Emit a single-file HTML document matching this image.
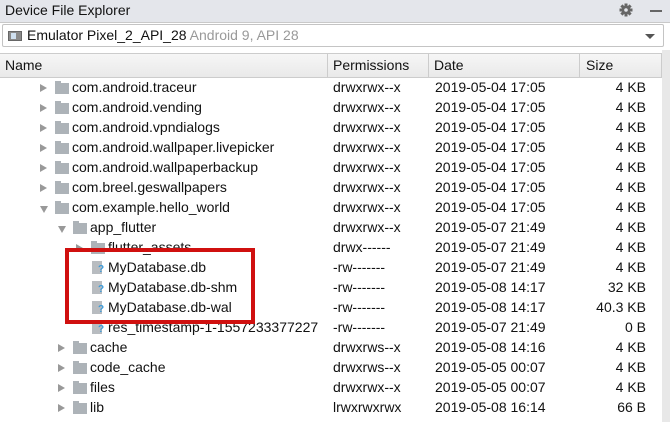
<!DOCTYPE html><html><head><style>
*{margin:0;padding:0;box-sizing:border-box}
body{width:670px;height:422px;overflow:hidden;background:#fff;font-family:"Liberation Sans",sans-serif;font-size:14px;color:#111;position:relative}
.title{position:absolute;left:0;top:0;width:670px;height:23px;background:#e4e6eb;border-bottom:1px solid #c9c9c9}
.title span{position:absolute;left:5px;top:2px;font-size:14px}
.combo{position:absolute;left:2px;top:24px;width:662px;height:23px;border:1px solid #c4c4c4;background:#fff;border-radius:2px}
.combo .t{position:absolute;left:24px;top:2px}
.combo .g{color:#999}
.hdr{position:absolute;left:0;top:53px;width:662px;height:25px;background:linear-gradient(#f6f6f6,#e9e9e9);border-top:1px solid #ccc;border-bottom:1px solid #ccc}
.hdr div{position:absolute;top:3px}
.sep{position:absolute;top:53px;width:1px;height:25px;background:#ccc}
.bgr{position:absolute;left:662px;top:50px;width:8px;height:372px;background:#e8e8e8}
.row{position:absolute;left:0;width:662px;height:20px}
.row span{position:absolute;top:1px;white-space:nowrap}
.arr{position:absolute;top:6px;width:0;height:0;border-top:4px solid transparent;border-bottom:4px solid transparent;border-left:7px solid #999}
.arrd{position:absolute;top:8px;width:0;height:0;border-left:4px solid transparent;border-right:4px solid transparent;border-top:7px solid #999}
.fold{position:absolute;top:5px;width:14px;height:11px;background:#adb3b8}
.fold:before{content:"";position:absolute;left:0;top:-2px;width:6px;height:2px;background:#adb3b8}
.file{position:absolute;top:3px;width:10px;height:13px;background:#b8bcc0}
.file:after{content:"?";position:absolute;left:6px;top:3px;font-size:10px;color:#3a9ad9;font-weight:bold}
.red{position:absolute;left:65px;top:248px;width:190px;height:76px;border:4px solid #d0100f}
</style></head><body>
<div class="title"><span>Device File Explorer</span>
<svg style="position:absolute;left:619px;top:3px" width="14" height="14" viewBox="0 0 14 14"><g fill="#666"><rect x="5.5" y="0.5" width="3" height="13"/><rect x="0.5" y="5.5" width="13" height="3"/><rect x="5.5" y="0.5" width="3" height="13" transform="rotate(45 7 7)"/><rect x="5.5" y="0.5" width="3" height="13" transform="rotate(-45 7 7)"/><circle cx="7" cy="7" r="4.5"/></g><circle cx="7" cy="7" r="1.8" fill="#e4e6eb"/></svg>
<div style="position:absolute;left:650px;top:10px;width:12px;height:2px;background:#666"></div></div>
<div class="combo"><div style="position:absolute;left:5px;top:6px;width:14px;height:10px;background:#8a8a8a;border:1px solid #666"><div style="position:absolute;left:2px;top:1px;width:5px;height:6px;background:#cfe0f0"></div></div>
<div class="t">Emulator Pixel_2_API_28 <span class="g">Android 9, API 28</span></div>
<div style="position:absolute;right:8px;top:9px;border-left:5px solid transparent;border-right:5px solid transparent;border-top:5px solid #555"></div></div>
<div class="hdr"><div style="left:5px">Name</div><div style="left:333px">Permissions</div><div style="left:434px">Date</div><div style="left:586px">Size</div></div>
<div class="sep" style="left:327px"></div><div class="sep" style="left:428px"></div><div class="sep" style="left:579px"></div><div class="sep" style="left:661px"></div>
<div class="bgr"></div>
<div id="rows"></div>
<script>
var R=[
[1,'a','com.android.traceur','drwxrwx--x','2019-05-04 17:05','4 KB'],
[1,'a','com.android.vending','drwxrwx--x','2019-05-04 17:05','4 KB'],
[1,'a','com.android.vpndialogs','drwxrwx--x','2019-05-04 17:05','4 KB'],
[1,'a','com.android.wallpaper.livepicker','drwxrwx--x','2019-05-04 17:05','4 KB'],
[1,'a','com.android.wallpaperbackup','drwxrwx--x','2019-05-04 17:05','4 KB'],
[1,'a','com.breel.geswallpapers','drwxrwx--x','2019-05-04 17:05','4 KB'],
[1,'d','com.example.hello_world','drwxrwx--x','2019-05-04 17:05','4 KB'],
[2,'d','app_flutter','drwxrwx--x','2019-05-07 21:49','4 KB'],
[3,'a','flutter_assets','drwx------','2019-05-07 21:49','4 KB'],
[3,'f','MyDatabase.db','-rw-------','2019-05-07 21:49','4 KB'],
[3,'f','MyDatabase.db-shm','-rw-------','2019-05-08 14:17','32 KB'],
[3,'f','MyDatabase.db-wal','-rw-------','2019-05-08 14:17','40.3 KB'],
[3,'f','res_timestamp-1-1557233377227','-rw-------','2019-05-07 21:49','0 B'],
[2,'a','cache','drwxrws--x','2019-05-08 14:16','4 KB'],
[2,'a','code_cache','drwxrws--x','2019-05-05 00:07','4 KB'],
[2,'a','files','drwxrwx--x','2019-05-05 00:07','4 KB'],
[2,'a','lib','lrwxrwxrwx','2019-05-08 16:14','66 B']];
var h='';R.forEach(function(r,i){var y=78+i*20,ax=40+(r[0]-1)*18,tx=72+(r[0]-1)*18;
h+='<div class="row" style="top:'+y+'px">';
if(r[1]=='f')h+='<div class="file" style="left:'+(tx-16)+'px"></div>';
else{h+='<div class="'+(r[1]=='d'?'arrd':'arr')+'" style="left:'+ax+'px"></div><div class="fold" style="left:'+(tx-17)+'px"></div>';}
h+='<span style="left:'+tx+'px">'+r[2]+'</span><span style="left:333px">'+r[3]+'</span><span style="left:435px">'+r[4]+'</span><span style="right:16px">'+r[5]+'</span></div>';});
document.getElementById('rows').innerHTML=h;
</script>
<div class="red"></div>
</body></html>
